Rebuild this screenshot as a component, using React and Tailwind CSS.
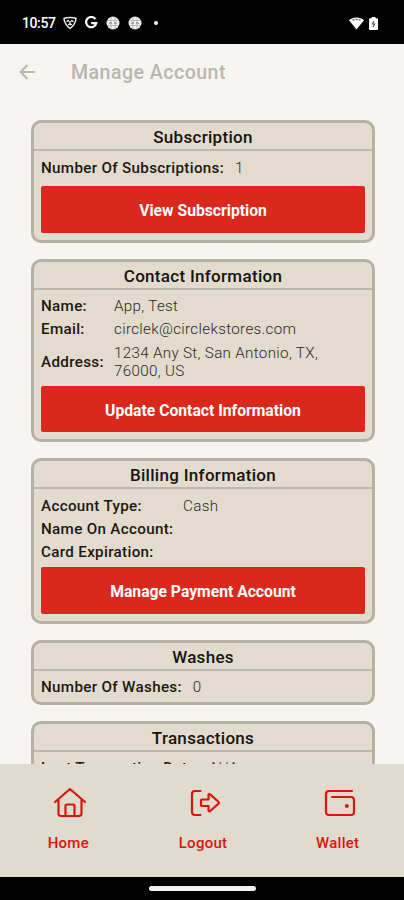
import React from 'react';

const StatusBar = () => (
    <div className="h-11 shrink-0 bg-black text-white flex items-center pl-[22px] pr-[26px] pt-[2px]">
        <span className="text-[14px] font-medium tracking-[-0.4px] w-[41px] leading-none">10:57</span>
        <svg width="14" height="14" viewBox="0 0 14 14" fill="none" stroke="#e8e8e8" strokeWidth="1.5">
            <path d="M1 2.5C4 1 10 1 13 2.5 13 6 10 10.500 7 12.500 4 10.500 1 6 1 2.500Z" />
            <path d="M3.500 5.500 6 4.500M8 4.500l2.500 1M5 8.500h4M7 5v3" />
        </svg>
        <svg className="ml-[7px]" width="14" height="14" viewBox="0 0 14 14" fill="none" stroke="#fff" strokeWidth="2.200">
            <path d="M11.400 3.200A5.100 5.100 0 1 0 12.200 7.200H7.200" />
        </svg>
        {[0, 1].map((i) => (
            <svg key={i} className="ml-[8px]" width="14" height="14" viewBox="0 0 14 14">
                <circle cx="7" cy="7" r="6.500" fill="#eee" />
                <path d="M1 4.500h12M1 9.500h12M5 1v12M9 1v12" stroke="#aaa" strokeWidth="0.7" />
                <path d="M3 7h3M8 7h3" stroke="#777" strokeWidth="1.200" />
            </svg>
        ))}
        <span className="ml-[12px] w-1 h-1 rounded-full bg-white" />
        <svg className="ml-auto" width="15" height="13" viewBox="0 0 15 13">
            <path d="M0 3.200C4-.5 11-.5 15 3.200L7.500 12.500Z" fill="#fff" />
            <path d="M3.500 3.300Q7.500 1.500 11.500 3.300" stroke="#555" strokeWidth="1.200" strokeDasharray="2.200 1" fill="none" />
        </svg>
        <svg className="ml-[5px]" width="9" height="13" viewBox="0 0 9 13">
            <path d="M2.500 0h4v1.200H8q1 0 1 1V12q0 1-1 1H1q-1 0-1-1V2.200q0-1 1-1h1.500Z" fill="#fff" />
            <path d="M5 4 3.500 7h2L4 10" stroke="#555" strokeWidth="1.200" fill="none" />
        </svg>
    </div>
);

const Card = ({ title, children, bodyClass = 'pb-[7px]' }) => (
    <section className="shrink-0 border-[3px] border-[#b5b1a5] rounded-[10px] bg-[#e2dbce]">
        <h2 className="h-[28px] pt-[1px] border-b-2 border-[#bdb8ac] text-center text-[17px] leading-[27px] font-medium tracking-[0.3px] text-[#16140f]">
            {title}
        </h2>
        <div className={`px-[7px] pt-[5px] ${bodyClass}`}>{children}</div>
    </section>
);

const Row = ({ label, value, labelClass = 'mr-[11px]' }) => (
    <div className="flex items-center min-h-[23px] text-[15.200px] leading-[18px] tracking-[0.320px]">
        <span className={`font-medium text-[#1b1914] shrink-0 ${labelClass}`}>{label}</span>
        <span className="font-light text-[#2b2925] whitespace-nowrap">{value}</span>
    </div>
);

const Button = ({ children }) => (
    <button className="block w-full h-[46.500px] pt-[4px] rounded-[2px] bg-[#da291c] text-white text-[15.700px] font-bold">
        {children}
    </button>
);

const HomeIcon = () => (
    <svg width="34" height="32" viewBox="0 0 34 32" fill="none" stroke="#d9150f" strokeWidth="2.200" strokeLinecap="round" strokeLinejoin="round">
        <path d="M2 15 17 2 32 15M5.500 13V26.500q0 2.500 2.500 2.500H26q2.500 0 2.500-2.500V13M12.500 28.500V19q0-1.500 1.500-1.500h6q1.500 0 1.500 1.500V28.500" />
    </svg>
);

const LogoutIcon = () => (
    <svg width="32" height="28" viewBox="0 0 32 28" fill="none" stroke="#d9150f" strokeWidth="2.200" strokeLinecap="round" strokeLinejoin="round">
        <path d="M11.500 2H6Q3 2 3 5V23Q3 26 6 26H11.500" />
        <path d="M13 10.500h6.500V6.500q0-2.500 2-.8l7.700 6.800q1.500 1.200 0 2.400l-7.700 6.800q-2 1.700-2-.8V17H13q-1 0-1-1V11.500q0-1 1-1Z" />
    </svg>
);

const WalletIcon = () => (
    <svg width="32" height="28" viewBox="0 0 32 28" fill="none" stroke="#d9150f" strokeWidth="2.200" strokeLinecap="round" strokeLinejoin="round">
        <path d="M28 2H5Q2 2 2 5V23Q2 26 5 26H27Q30 26 30 23V11Q30 8 27 8H8" />
        <circle cx="22.800" cy="17" r="0.900" fill="#d9150f" />
    </svg>
);

const NavItem = ({ icon, label }) => (
    <div className="flex-1 flex flex-col items-center">
        <div className="h-[38px] flex items-center pl-[4px]">{icon}</div>
        <span className="mt-[11px] text-[15px] leading-[20px] font-medium tracking-[0.250px] text-[#d9150f]">{label}</span>
    </div>
);

export default function App() {
    return (
        <div className="w-full h-[900px] flex flex-col overflow-hidden bg-[#f7f5f1] font-[Roboto,sans-serif]">
            <StatusBar />
            <header className="h-[56px] shrink-0 flex items-center pl-[19px] text-[#bbb6ac]">
                <svg width="17" height="16" viewBox="0 0 17 16" fill="none" stroke="currentColor" strokeWidth="2">
                    <path d="M8.500 1 1.500 8l7 7M1.500 8H16" />
                </svg>
                <h1 className="ml-[35px] pt-[1px] text-[19.600px] font-medium tracking-[0.460px]">Manage Account</h1>
            </header>
            <main className="flex-1 min-h-0 overflow-hidden pt-[20px] pl-[31px] pr-[29px] flex flex-col gap-[16px]">
                <Card title="Subscription">
                    <Row label="Number Of Subscriptions:" value="1" />
                    <div className="mt-[7px]"><Button>View Subscription</Button></div>
                </Card>
                <Card title="Contact Information">
                    <Row label="Name:" value="App, Test" labelClass="w-[73px]" />
                    <Row label="Email:" value="circlek@circlekstores.com" labelClass="w-[73px]" />
                    <div className="pt-[3px] pb-[6px]">
                        <Row label="Address:" value={<>1234 Any St, San Antonio, TX,<br />76000, US</>} labelClass="w-[73px]" />
                    </div>
                    <Button>Update Contact Information</Button>
                </Card>
                <Card title="Billing Information">
                    <Row label="Account Type:" value="Cash" labelClass="w-[142px]" />
                    <Row label="Name On Account:" />
                    <Row label="Card Expiration:" />
                    <div className="mt-[4px]"><Button>Manage Payment Account</Button></div>
                </Card>
                <Card title="Washes" bodyClass="pb-[3px]">
                    <Row label="Number Of Washes:" value="0" />
                </Card>
                <Card title="Transactions">
                    <Row label="Last Transaction Date:" value="N/A" />
                </Card>
            </main>
            <nav className="h-[113px] shrink-0 flex bg-[#e1dbcd] pt-[20px] pl-[1px] -mr-px">
                <NavItem icon={<HomeIcon />} label="Home" />
                <NavItem icon={<LogoutIcon />} label="Logout" />
                <NavItem icon={<WalletIcon />} label="Wallet" />
            </nav>
            <div className="h-[23px] shrink-0 bg-black flex justify-center items-center">
                <div className="w-[107px] h-[5px] rounded-full bg-[#f2f2f2]" />
            </div>
        </div>
    );
}
